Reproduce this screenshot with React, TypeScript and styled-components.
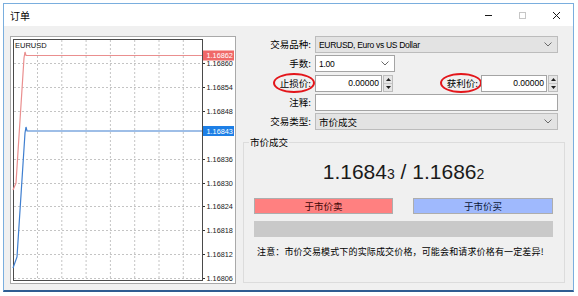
import React from 'react';
import styled, { createGlobalStyle, css } from 'styled-components';

const CJK = `'Noto Sans CJK SC', 'Liberation Sans', sans-serif`;
const LATIN = `'Liberation Sans', 'Noto Sans CJK SC', sans-serif`;

const GlobalStyle = createGlobalStyle`
  html, body {
    margin: 0;
    padding: 0;
    background: #ffffff;
  }
  body {
    font-family: ${LATIN};
  }
`;

const Window = styled.div`
  margin: 3px 0 0 3px;
  width: 571px;
  height: 289px;
  box-sizing: border-box;
  border: 1px solid #7aaede;
  border-bottom: 2px solid #2f5d92;
  display: flex;
  flex-direction: column;
  background: #f0f0f0;
`;

const TitleBar = styled.div`
  height: 22px;
  flex: none;
  background: #ffffff;
  display: flex;
  align-items: center;
  padding-left: 6px;
`;

const Title = styled.span`
  font: 10px ${CJK};
  color: #000;
`;

const Controls = styled.div`
  margin-left: auto;
  display: flex;
  height: 100%;
`;

const CtrlButton = styled.div`
  width: 34px;
  height: 100%;
  display: flex;
  align-items: center;
  justify-content: center;
`;

const Body = styled.div`
  flex: 1;
  display: flex;
  gap: 7px;
  padding: 10px 0 0 6px;
`;

const ChartFrame = styled.div`
  width: 226px;
  height: 248px;
  box-sizing: border-box;
  border: 1px solid #a9a9a9;
  background: #ffffff;
  flex: none;
  svg {
    display: block;
  }
`;

const Side = styled.div`
  width: 322px;
  display: flex;
  flex-direction: column;
`;

const Form = styled.div`
  display: grid;
  grid-template-columns: 68px 243px;
  grid-auto-rows: 17px;
  column-gap: 4px;
  row-gap: 2.25px;
  align-items: center;
`;

const Label = styled.span<{ $circled?: boolean }>`
  justify-self: end;
  font: 9.5px/13px ${CJK};
  color: #000;
  white-space: nowrap;
  ${({ $circled }) =>
    $circled &&
    css`
      border: 2px solid #e3161b;
      border-radius: 50%;
      padding: 1.5px 2px 1.5px 5px;
      margin-right: -4px;
    `}
`;

const Select = styled.div<{ $disabled?: boolean; $width?: number }>`
  width: ${({ $width }) => ($width ? `${$width}px` : '100%')};
  height: 17px;
  box-sizing: border-box;
  border: 1px solid ${({ $disabled }) => ($disabled ? '#bcbcbc' : '#a4a4a4')};
  background: ${({ $disabled }) => ($disabled ? '#e3e3e3' : '#ffffff')};
  display: flex;
  align-items: center;
  padding: 0 5px 0 3px;
  font: 8.5px ${LATIN};
  letter-spacing: -0.3px;
  color: #000;
  svg {
    margin-left: auto;
  }
`;

const SelectCjk = styled.span`
  font: 9.5px ${CJK};
  letter-spacing: 0;
`;

const TextBox = styled.div`
  height: 17px;
  box-sizing: border-box;
  border: 1px solid #a4a4a4;
  background: #ffffff;
`;

const StopRow = styled.div`
  display: flex;
  align-items: center;
  justify-content: space-between;
`;

const TakeGroup = styled.div`
  display: flex;
  align-items: center;
  gap: 3px;
`;

const Spin = styled.div`
  display: flex;
  height: 17px;
  gap: 1px;
`;

const SpinInput = styled.div<{ $width: number }>`
  width: ${({ $width }) => $width}px;
  box-sizing: border-box;
  border: 1px solid #a4a4a4;
  background: #ffffff;
  display: flex;
  align-items: center;
  justify-content: flex-end;
  padding-right: 2px;
  font: 8.5px ${LATIN};
  color: #000;
`;

const SpinArrows = styled.div`
  width: 10px;
  box-sizing: border-box;
  border: 1px solid #bdbdbd;
  background: #e6e6e6;
  display: flex;
  flex-direction: column;
`;

const SpinHalf = styled.div<{ $top?: boolean }>`
  flex: 1;
  display: flex;
  align-items: center;
  justify-content: center;
  border-bottom: ${({ $top }) => ($top ? '1px solid #c8c8c8' : 'none')};
`;

const Group = styled.div`
  position: relative;
  margin-top: 12px;
  height: 141px;
  box-sizing: border-box;
  border: 1px solid #dcdcdc;
  padding: 0 11px 0 10px;
  display: flex;
  flex-direction: column;
`;

const Legend = styled.span`
  position: absolute;
  top: -7px;
  left: 5px;
  padding: 0 1px;
  background: #f0f0f0;
  font: 9.5px/13px ${CJK};
  color: #000;
`;

const Quote = styled.div`
  margin-top: 17px;
  height: 24px;
  text-align: center;
  font: 21px/24px ${LATIN};
  color: #1a1a1a;
  small {
    font-size: 14px;
  }
`;

const Buttons = styled.div`
  margin-top: 14px;
  display: flex;
  justify-content: space-between;
`;

const TradeButton = styled.div<{ $side: 'sell' | 'buy' }>`
  width: ${({ $side }) => ($side === 'sell' ? 139 : 140)}px;
  height: 16px;
  box-sizing: border-box;
  border: 1px solid #adadad;
  background: ${({ $side }) => ($side === 'sell' ? '#ff8080' : '#9fb9fd')};
  color: ${({ $side }) => ($side === 'sell' ? '#3d0606' : '#0b1838')};
  display: flex;
  align-items: center;
  justify-content: center;
  font: 9.5px ${CJK};
`;

const Bar = styled.div`
  margin-top: 7px;
  height: 16px;
  background: #c9c9c9;
`;

const Note = styled.div`
  margin-top: 9px;
  padding-left: 3px;
  font: 9px/12px ${CJK};
  letter-spacing: 0.15px;
  color: #000;
  white-space: nowrap;
`;

const Chevron = () => (
  <svg width="8" height="5" viewBox="0 0 8 5">
    <polyline points="0.5,0.5 4,4 7.5,0.5" fill="none" stroke="#6a6a6a" strokeWidth="1" />
  </svg>
);

const SpinBox = ({ width }: { width: number }) => (
  <Spin>
    <SpinInput $width={width}>0.00000</SpinInput>
    <SpinArrows>
      <SpinHalf $top>
        <svg width="5" height="3" viewBox="0 0 5 3">
          <polygon points="0,3 2.5,0 5,3" fill="#202020" />
        </svg>
      </SpinHalf>
      <SpinHalf>
        <svg width="5" height="3" viewBox="0 0 5 3">
          <polygon points="0,0 2.5,3 5,0" fill="#202020" />
        </svg>
      </SpinHalf>
    </SpinArrows>
  </Spin>
);

const prices = ['1.16860', '1.16854', '1.16848', '1.16842', '1.16836', '1.16830', '1.16824', '1.16818', '1.16812', '1.16806'];
const gridY = (i: number) => 26 + i * 23.9;
const gridX = [26, 50.3, 74.6, 98.9, 123.2, 147.5, 171.8];

const askPath = '2,153 5,146 13,21 14,15 15,18.5 191,18.5';
const bidPath = '2,231 6,220 14,96 15,90 16,94 191,94';

const Chart = () => (
  <svg width="224" height="246" viewBox="0 0 224 246" fontFamily={LATIN}>
    {gridX.map((x) => (
      <line key={x} x1={x + 0.5} y1={3} x2={x + 0.5} y2={243} stroke="#c4c4c4" strokeDasharray="2 2" />
    ))}
    {prices.map((p, i) => (
      <g key={p}>
        {i !== 3 && (
          <line x1={3} y1={Math.round(gridY(i)) + 0.5} x2={191} y2={Math.round(gridY(i)) + 0.5} stroke="#c4c4c4" strokeDasharray="2 2" />
        )}
        <line x1={191} y1={Math.round(gridY(i)) + 0.5} x2={194} y2={Math.round(gridY(i)) + 0.5} stroke="#333" />
        <text x={195.5} y={gridY(i) + 3} fontSize="7.3" fill="#222">
          {p === '1.16842' ? '' : p}
        </text>
      </g>
    ))}
    <rect x={2.5} y={2.5} width={189} height={241} fill="none" stroke="#4a4a4a" />
    <text x={4} y={11} fontSize="7.5" fill="#111">EURUSD</text>
    <polyline points={askPath} fill="none" stroke="#ea8f8f" strokeWidth="1.2" />
    <polyline points={bidPath} fill="none" stroke="#3f7fd0" strokeWidth="1.2" />
    <rect x={192} y={13.5} width={31} height={10} fill="#f06868" />
    <text x={195.5} y={21.3} fontSize="7.3" fill="#ffffff">1.16862</text>
    <rect x={192} y={89} width={31} height={10} fill="#1d7fe6" />
    <text x={195.5} y={96.8} fontSize="7.3" fill="#ffffff">1.16843</text>
  </svg>
);

export default function App() {
  return (
    <>
      <GlobalStyle />
      <Window>
        <TitleBar>
          <Title>订单</Title>
          <Controls>
            <CtrlButton>
              <svg width="9" height="9" viewBox="0 0 9 9">
                <line x1="1" y1="4.5" x2="8" y2="4.5" stroke="#1a1a1a" />
              </svg>
            </CtrlButton>
            <CtrlButton>
              <svg width="8" height="8" viewBox="0 0 8 8">
                <rect x="1.5" y="1.5" width="6" height="6" fill="none" stroke="#c6c6c6" />
              </svg>
            </CtrlButton>
            <CtrlButton>
              <svg width="9" height="9" viewBox="0 0 9 9">
                <path d="M1 1 L8 8 M8 1 L1 8" stroke="#1a1a1a" strokeWidth="1" />
              </svg>
            </CtrlButton>
          </Controls>
        </TitleBar>
        <Body>
          <ChartFrame>
            <Chart />
          </ChartFrame>
          <Side>
            <Form>
              <Label>交易品种:</Label>
              <Select $disabled>
                EURUSD, Euro vs US Dollar
                <Chevron />
              </Select>
              <Label>手数:</Label>
              <Select $width={80}>
                1.00
                <Chevron />
              </Select>
              <Label $circled>止损价:</Label>
              <StopRow>
                <SpinBox width={67} />
                <TakeGroup>
                  <Label $circled>获利价:</Label>
                  <SpinBox width={66} />
                </TakeGroup>
              </StopRow>
              <Label>注释:</Label>
              <TextBox />
              <Label>交易类型:</Label>
              <Select $disabled>
                <SelectCjk>市价成交</SelectCjk>
                <Chevron />
              </Select>
            </Form>
            <Group>
              <Legend>市价成交</Legend>
              <Quote>
                1.1684<small>3</small> / 1.1686<small>2</small>
              </Quote>
              <Buttons>
                <TradeButton $side="sell">于市价卖</TradeButton>
                <TradeButton $side="buy">于市价买</TradeButton>
              </Buttons>
              <Bar />
              <Note>注意：市价交易模式下的实际成交价格，可能会和请求价格有一定差异!</Note>
            </Group>
          </Side>
        </Body>
      </Window>
    </>
  );
}
